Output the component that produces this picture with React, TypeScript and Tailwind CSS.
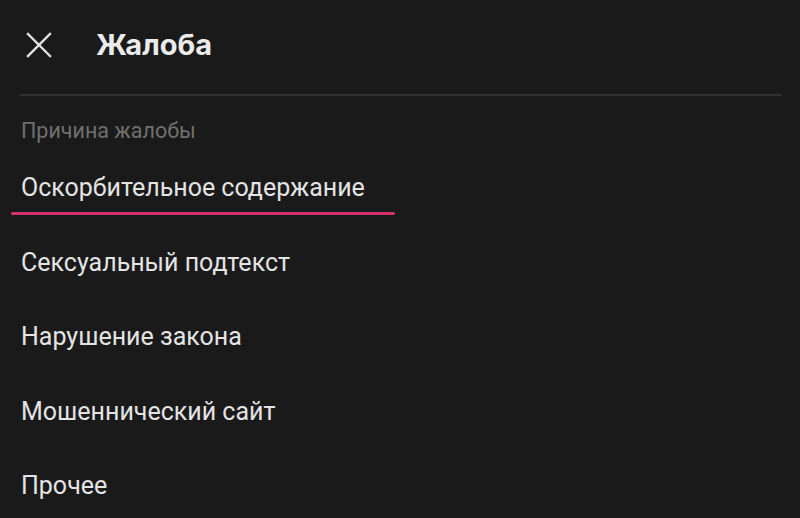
const reasons = [
  "Оскорбительное содержание",
  "Сексуальный подтекст",
  "Нарушение закона",
  "Мошеннический сайт",
  "Прочее",
];

export default function App() {
  return (
    <div className="w-[800px] h-[518px] overflow-hidden bg-[#1a1a1a] text-[#e4e4e4] font-['Roboto',sans-serif]">
      {/* Header */}
      <div className="flex items-center h-[90px] pl-[25px]">
        <svg width="28" height="28" viewBox="0 0 28 28" className="text-[#e3e3e3]">
          <path d="M3 3L25 25M25 3L3 25" stroke="currentColor" strokeWidth="2.4" strokeLinecap="square" />
        </svg>
        <h1 className="ml-[43px] text-[29px] font-bold font-['Inter',sans-serif] text-[#ebebeb]">
          Жалоба
        </h1>
      </div>
      <div className="mt-[4px] ml-[20px] mr-[18px] h-[2px] bg-[#303030]" />

      <div className="pt-[23px]">
        <p className="px-[21px] text-[21.5px] text-[#707070] leading-[24px]">
          Причина жалобы
        </p>
        <div className="flex flex-col">
          {reasons.map((r, i) => (
            <div key={r} className="relative h-[74.5px] flex items-start pt-[30px]">
              <span className="px-[21px] text-[25px] leading-[30px]">{r}</span>
              {i === 0 && (
                <div className="absolute left-[11px] w-[384px] top-[69px] h-[3px] rounded-full bg-[#d6306f]" />
              )}
            </div>
          ))}
        </div>
      </div>
    </div>
  );
}
